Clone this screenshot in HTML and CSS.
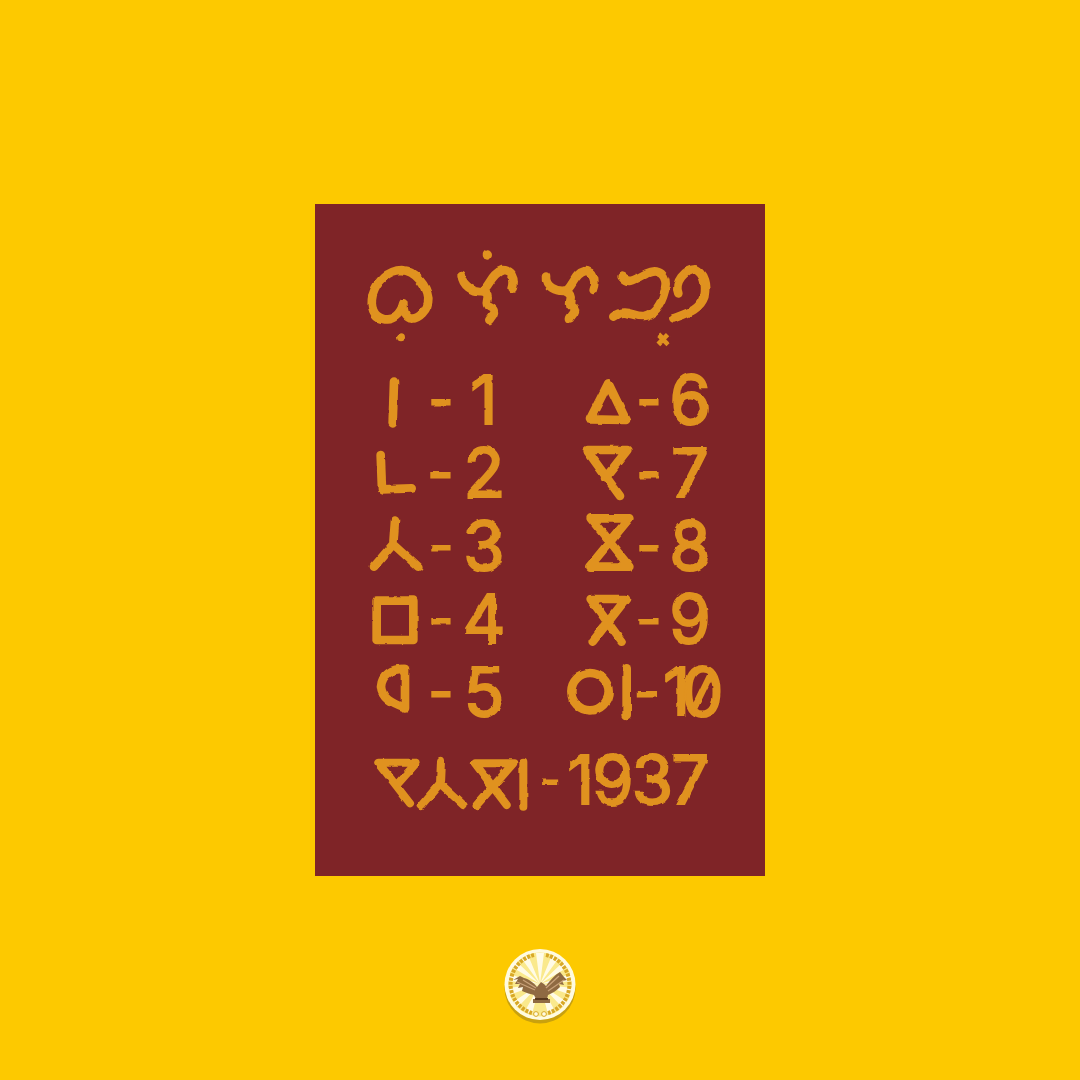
FILE: index.html
```html
<!DOCTYPE html>
<html lang="en">

<head>
    <meta charset="UTF-8">
    <meta name="viewport" content="width=device-width, initial-scale=1.0">
    <title>Numerals 1937</title>
    <link rel="stylesheet" href="styles.css">
</head>

<body>
    <!-- rough brush edge for the painted strokes and numbers -->
    <svg class="defs" width="0" height="0" aria-hidden="true">
        <filter id="rough" x="-5%" y="-5%" width="110%" height="110%" color-interpolation-filters="sRGB">
            <feTurbulence type="fractalNoise" baseFrequency="0.09" numOctaves="2" seed="4" result="noise" />
            <feDisplacementMap in="SourceGraphic" in2="noise" scale="3.2" xChannelSelector="R" yChannelSelector="G" />
            <feGaussianBlur stdDeviation="0.55" />
        </filter>
    </svg>

    <main class="page">
        <section class="card">
            <div class="painted">
                <svg class="heading" viewBox="0 0 1140 360" role="img" aria-label="Script heading">
                    <g class="brush">
                        <path d="M160 205 C152 240 125 258 100 252 C70 245 60 215 68 180 C80 140 115 105 155 105 C195 108 230 150 235 190 C236 225 205 255 180 250 C165 245 160 230 160 205 Z" />
                        <path d="M335 120 C338 150 365 172 398 168 C420 150 425 115 458 105 C482 105 497 130 488 160" />
                        <path d="M398 168 C432 182 395 205 418 216 C445 228 425 242 418 255" />
                        <path d="M588 125 C585 155 620 172 650 166 C670 150 675 115 705 108 C730 110 740 135 728 165" />
                        <path d="M645 168 C682 185 645 205 668 215 C685 228 665 238 660 250" />
                        <path d="M815 125 C835 152 862 130 890 115 C925 98 955 120 945 165 C935 205 918 240 880 243 C850 245 825 218 790 245" />
                        <path d="M985 175 C972 140 1005 104 1035 103 C1062 115 1070 150 1063 185 C1050 225 1010 235 970 250" />
                        <path class="thin" d="M925 298 L955 328 M955 298 L925 328" />
                    </g>
                    <circle class="dot" cx="412" cy="60" r="14" />
                    <circle class="dot" cx="153" cy="307" r="12" />
                </svg>

                <div class="numerals">
                    <div class="column column-left">
                        <div class="entry">
                            <svg class="symbol" viewBox="0 -21 240 219"><path class="brush" d="M132 35 L128 160" /></svg>
                            <span class="dash">-</span><span class="digit">1</span>
                        </div>
                        <div class="entry">
                            <svg class="symbol" viewBox="0 198 240 219"><path class="brush" d="M92 255 L96 358 L185 355" /></svg>
                            <span class="dash">-</span><span class="digit">2</span>
                        </div>
                        <div class="entry">
                            <svg class="symbol" viewBox="0 417 240 219"><path class="brush" d="M135 452 L130 522 L72 590 M130 522 L205 590" /></svg>
                            <span class="dash">-</span><span class="digit">3</span>
                        </div>
                        <div class="entry">
                            <svg class="symbol" viewBox="0 636 240 219"><path class="brush" d="M80 692 H190 V810 H80 Z" /></svg>
                            <span class="dash">-</span><span class="digit">4</span>
                        </div>
                        <div class="entry">
                            <svg class="symbol" viewBox="0 855 240 219"><path class="brush" d="M165 897 V1015 C125 1000 95 985 93 950 C95 915 125 895 165 897 Z" /></svg>
                            <span class="dash">-</span><span class="digit">5</span>
                        </div>
                    </div>

                    <div class="column column-right">
                        <div class="entry">
                            <svg class="symbol" viewBox="0 -21 285 219"><path class="brush" d="M205 40 L150 148 L258 150 Z" /></svg>
                            <span class="dash">-</span><span class="digit">6</span>
                        </div>
                        <div class="entry">
                            <svg class="symbol" viewBox="0 198 285 219"><path class="brush" d="M240 378 L140 240 H262 L195 325" /></svg>
                            <span class="dash">-</span><span class="digit">7</span>
                        </div>
                        <div class="entry">
                            <svg class="symbol" viewBox="0 417 285 219"><path class="brush" d="M152 445 H268 L148 590 H268 Z" /></svg>
                            <span class="dash">-</span><span class="digit">8</span>
                        </div>
                        <div class="entry">
                            <svg class="symbol" viewBox="0 636 285 219"><path class="brush" d="M245 815 L152 687 H258 L158 815" /></svg>
                            <span class="dash">-</span><span class="digit">9</span>
                        </div>
                        <div class="entry entry-ten">
                            <svg class="symbol" viewBox="0 855 285 219">
                                <g class="brush">
                                    <circle cx="150" cy="965" r="56" />
                                    <path d="M260 895 V1035" />
                                </g>
                            </svg>
                            <span class="dash">-</span><span class="digit">10</span>
                        </div>
                    </div>
                </div>

                <div class="year">
                    <svg class="year-symbols" viewBox="0 0 525 240">
                        <path class="brush" d="M150 190 L55 68 H170 L110 135 M243 62 L240 130 L185 195 M240 130 L310 195 M440 195 L345 70 H460 L350 195 M490 65 V200" />
                    </svg>
                    <span class="dash">-</span><span class="digit">1937</span>
                </div>
            </div>
        </section>

        <svg class="badge" viewBox="0 0 72 78" role="img" aria-label="Eagle emblem">
            <circle class="badge-shadow" cx="36" cy="39" r="35.5" />
            <circle class="badge-rim" cx="36" cy="35.5" r="35.5" />
            <circle class="badge-face" cx="36" cy="35.5" r="32" />
            <g class="badge-rays">
                <path d="M36 35 L32 4 H40 Z" />
                <path d="M36 35 L18 10 L24 6 Z" />
                <path d="M36 35 L54 10 L48 6 Z" />
                <path d="M36 35 L8 18 L12 12 Z" />
                <path d="M36 35 L64 18 L60 12 Z" />
                <path d="M36 35 L4 32 L5 25 Z" />
                <path d="M36 35 L68 32 L67 25 Z" />
                <path d="M36 35 L5 46 L4 39 Z" />
                <path d="M36 35 L67 46 L68 39 Z" />
                <path d="M36 35 L14 58 L9 53 Z" />
                <path d="M36 35 L58 58 L63 53 Z" />
                <path d="M36 35 L28 65 L21 62 Z" />
                <path d="M36 35 L44 65 L51 62 Z" />
            </g>
            <path class="laurel" d="M30 6 A30 30 0 0 0 28 64" />
            <path class="laurel" d="M42 6 A30 30 0 0 1 44 64" />
            <circle class="laurel-end" cx="32" cy="65" r="2.4" />
            <circle class="laurel-end" cx="40" cy="65" r="2.4" />
            <path class="eagle" d="M9 31 L14 30 L11 35 L16 35 L14 39 L19 38 L18 42 C22 44 27 45 30 46 L32 50 H29 V54 H46 V50 H43 L44 46 C49 44 53 41 56 38 L55 35 L60 36 L58 32 L63 31 L60 28 L56 23 C51 26 46 31 42 37 L40 35 L37 33 L33 38 C30 34 25 30 20 29 L16 27 Z" />
            <path class="eagle-light" d="M13 33 L31 41 M19 31 L32 39 M60 31 L44 42 M55 27 L42 39" />
            <path class="eagle-dark" d="M31 50 H44" />
        </svg>
    </main>
</body>

</html>
```

FILE: styles.css
```css
body {
    margin: 0;
    background-color: #fdc900;
}

.defs {
    position: absolute;
}

.page {
    display: flex;
    flex-direction: column;
    align-items: center;
    padding-top: 204px;
}

.card {
    width: 450px;
    height: 672px;
    background-color: #7f2427;
    box-sizing: border-box;
    padding: 31px 35px 0;
}

.painted {
    filter: url(#rough);
    color: #e0921f;
    font-family: Inter, "Liberation Sans", sans-serif;
    font-weight: 400;
    font-feature-settings: "zero";
}

.brush {
    fill: none;
    stroke: #e0921f;
    stroke-width: 26;
    stroke-linecap: round;
    stroke-linejoin: round;
}

.heading .brush .thin {
    stroke-width: 16;
    stroke-linecap: butt;
}

.dot {
    fill: #e0921f;
}

.heading {
    display: block;
    width: 380px;
    height: 120px;
    margin-bottom: 8px;
}

.numerals {
    display: flex;
}

.column {
    width: 190px;
}

.entry {
    display: grid;
    align-items: center;
    height: 73px;
}

.column-left .entry {
    grid-template-columns: 78px 26px 56px;
}

.column-right .entry {
    grid-template-columns: 95px 28px 50px;
}

.entry-ten .dash {
    margin-right: 14px;
}

.entry-ten .digit {
    text-align: left;
    letter-spacing: -9px;
}

.symbol {
    display: block;
    height: 73px;
}

.column-left .symbol {
    width: 80px;
}

.column-right .symbol {
    width: 95px;
}

.dash,
.digit {
    text-align: center;
    line-height: 73px;
    white-space: nowrap;
    -webkit-text-stroke: 2px #e0921f;
}

.dash {
    font-size: 54px;
}

.digit {
    font-size: 67px;
    letter-spacing: -4px;
}

.year {
    display: flex;
    align-items: center;
    height: 80px;
    margin-top: 12px;
    padding-left: 10px;
}

.year-symbols {
    display: block;
    width: 175px;
    height: 80px;
}

.year .brush {
    stroke-width: 24;
}

.year .dash {
    width: 30px;
    font-size: 44px;
    line-height: 80px;
}

.year .digit {
    line-height: 82px;
    letter-spacing: -2px;
    margin-left: 2px;
}

.badge {
    display: block;
    width: 72px;
    height: 78px;
    margin-top: 73px;
}

.badge-shadow {
    fill: #c9a10e;
}

.badge-rim {
    fill: #fffbe0;
}

.badge-face {
    fill: #fae98c;
}

.badge-rays path {
    fill: #fffbe6;
}

.laurel {
    fill: none;
    stroke: #d8a826;
    stroke-width: 4;
    stroke-dasharray: 3 1.2;
}

.laurel-end {
    fill: #fffbe0;
    stroke: #d8a826;
    stroke-width: 1;
}

.eagle {
    fill: #8f6a42;
}

.eagle-light {
    fill: none;
    stroke: #c9a27a;
    stroke-width: 1.3;
}

.eagle-dark {
    fill: none;
    stroke: #5a3a1e;
    stroke-width: 2;
}
```
